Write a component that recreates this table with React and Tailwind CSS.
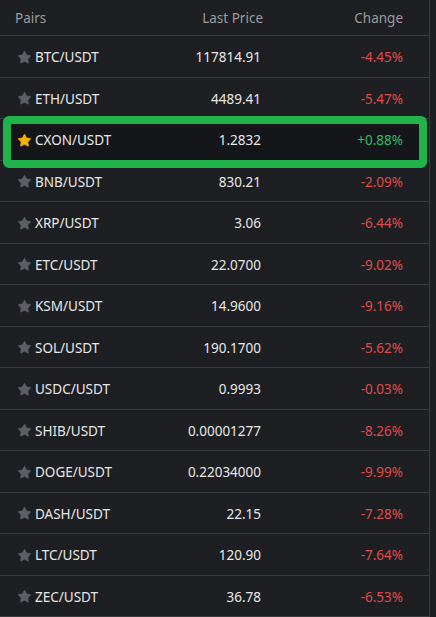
import { Star } from "lucide-react";

const rows = [
  { pair: "BTC/USDT", price: "117814.91", change: "-4.45%" },
  { pair: "ETH/USDT", price: "4489.41", change: "-5.47%" },
  { pair: "CXON/USDT", price: "1.2832", change: "+0.88%", fav: true },
  { pair: "BNB/USDT", price: "830.21", change: "-2.09%" },
  { pair: "XRP/USDT", price: "3.06", change: "-6.44%" },
  { pair: "ETC/USDT", price: "22.0700", change: "-9.02%" },
  { pair: "KSM/USDT", price: "14.9600", change: "-9.16%" },
  { pair: "SOL/USDT", price: "190.1700", change: "-5.62%" },
  { pair: "USDC/USDT", price: "0.9993", change: "-0.03%" },
  { pair: "SHIB/USDT", price: "0.00001277", change: "-8.26%" },
  { pair: "DOGE/USDT", price: "0.22034000", change: "-9.99%" },
  { pair: "DASH/USDT", price: "22.15", change: "-7.28%" },
  { pair: "LTC/USDT", price: "120.90", change: "-7.64%" },
  { pair: "ZEC/USDT", price: "36.78", change: "-6.53%" },
];

function Row({ row }) {
  const up = row.change.startsWith("+");
  return (
    <div className="relative flex items-center h-[41.5px] pt-[2px] border-b border-[#3a3b3f] text-[13.5px]">
      {row.fav && (
        <div className="absolute left-[3px] right-[2px] top-[-3px] h-[52px] rounded-[6px] border-[8px] border-[#22b24c] bg-[#151619]" />
      )}
      <div className="relative flex items-center w-[177px] pl-[17px] gap-[3px]">
        <Star
          size={15}
          strokeWidth={1}
          className={row.fav ? "fill-[#f5b400] text-[#f5b400]" : "fill-[#5c5f66] text-[#5c5f66]"}
        />
        <span className="text-[#e8e8e8]">{row.pair}</span>
      </div>
      <div className="relative w-[84px] text-right text-[#e8e8e8]">{row.price}</div>
      <div className={"relative flex-1 text-right pr-[26px] " + (up ? "text-[#2fbd6a]" : "text-[#e04a4a]")}>
        {row.change}
      </div>
    </div>
  );
}

export default function App() {
  return (
    <div
      className="w-[436px] h-[617px] overflow-hidden bg-[#1e1f22]"
      style={{ fontFamily: '"Noto Sans", "Open Sans", sans-serif' }}
    >
      <div className="w-[430px] h-full border-r border-[#3a3b3f]">
        <div className="flex items-center h-[36px] pt-[2px] border-b border-[#3a3b3f] text-[13.5px] text-[#9b9c9f]">
          <div className="w-[177px] pl-[15px]">Pairs</div>
          <div className="w-[86px] text-right">Last Price</div>
          <div className="flex-1 text-right pr-[26px]">Change</div>
        </div>
        {rows.map((r) => (
          <Row key={r.pair} row={r} />
        ))}
      </div>
    </div>
  );
}
